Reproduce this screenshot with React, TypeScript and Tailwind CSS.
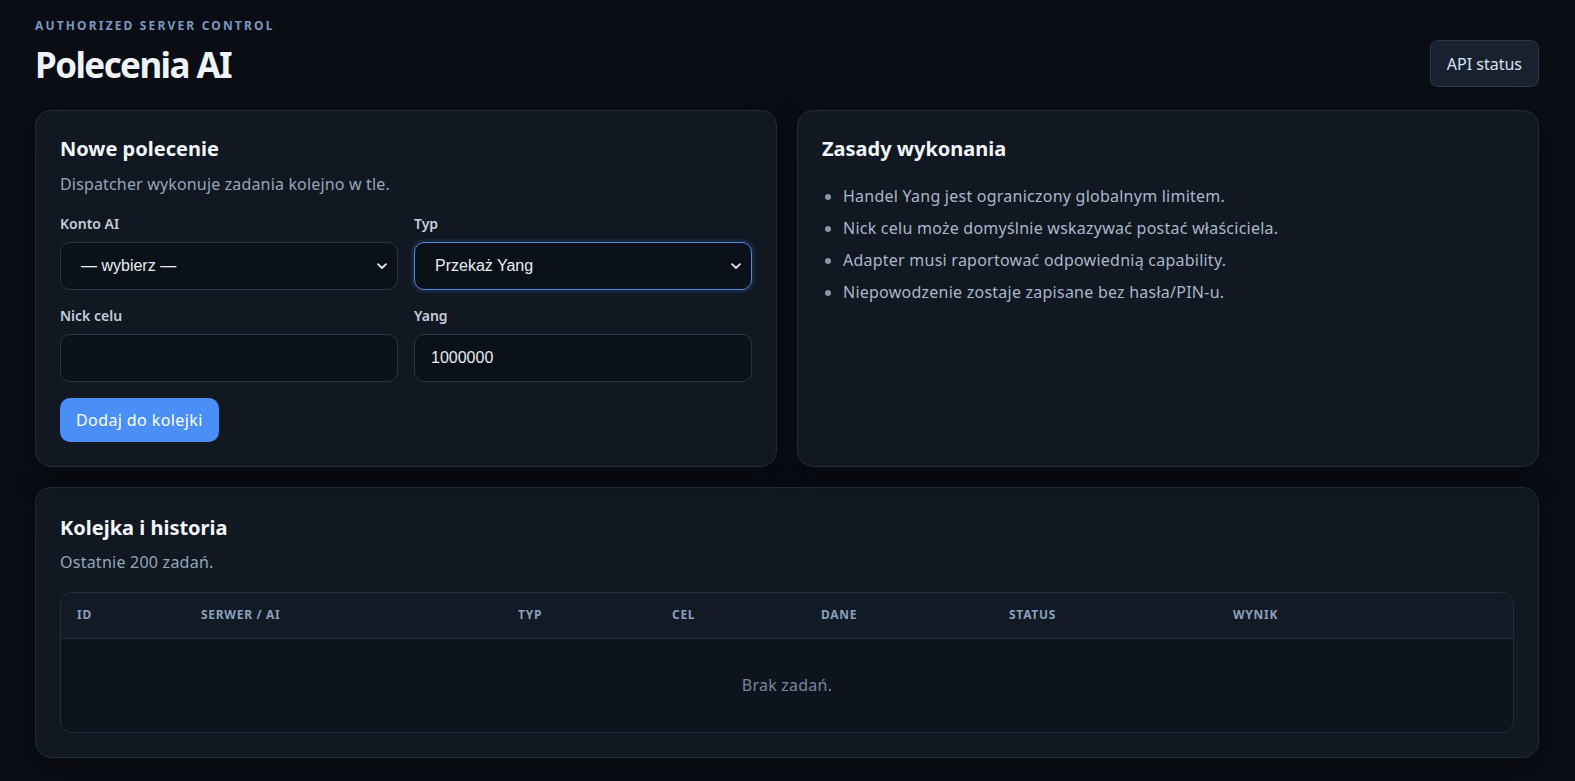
import React from 'react';

const columns = [
  { key: 'id', label: 'ID', width: 'w-[124px]' },
  { key: 'server', label: 'Serwer / AI', width: 'w-[317px]' },
  { key: 'type', label: 'Typ', width: 'w-[154px]' },
  { key: 'target', label: 'Cel', width: 'w-[149px]' },
  { key: 'data', label: 'Dane', width: 'w-[188px]' },
  { key: 'status', label: 'Status', width: 'w-[224px]' },
  { key: 'result', label: 'Wynik', width: '' },
];

const rules = [
  'Handel Yang jest ograniczony globalnym limitem.',
  'Nick celu może domyślnie wskazywać postać właściciela.',
  'Adapter musi raportować odpowiednią capability.',
  'Niepowodzenie zostaje zapisane bez hasła/PIN-u.',
];

function Chevron() {
  return (
    <svg
      className="pointer-events-none absolute right-[10px] top-1/2 -translate-y-1/2"
      width="12"
      height="12"
      viewBox="0 0 12 12"
      fill="none"
    >
      <path d="M2 4.2 6 8l4-3.8" stroke="#e5e9f0" strokeWidth="1.8" strokeLinecap="round" strokeLinejoin="round" />
    </svg>
  );
}

function Field({ label, children }: { label: string; children: React.ReactNode }) {
  return (
    <label className="flex flex-col gap-2">
      <span className="text-sm font-semibold leading-5 text-[#c3cedc]">{label}</span>
      {children}
    </label>
  );
}

function Card({ children, className = '' }: { children: React.ReactNode; className?: string }) {
  return (
    <section
      className={`rounded-2xl border border-[#222d3b] bg-[#111821] p-6 shadow-[0_10px_30px_rgba(0,0,0,0.35)] ${className}`}
    >
      {children}
    </section>
  );
}

export default function App() {
  return (
    <div className="min-h-[781px] bg-[#0a0d14] pl-[35px] pr-9 pb-6 pt-[18px] font-['Noto_Sans',sans-serif] text-[#e6ebf2]">
      <header className="mb-[25px] flex items-end justify-between">
        <div>
          <div className="text-xs font-bold uppercase leading-4 tracking-[0.18em] text-[#7b98c0]">
            Authorized server control
          </div>
          <h1 className="mt-[11px] text-[35px] font-bold leading-10 tracking-[-0.045em] text-[#eef3fa]">Polecenia AI</h1>
        </div>
        <button className="-mb-0.5 h-[47px] rounded-lg border border-[#2a3748] bg-[#172130] px-4 text-base text-[#dbe3ee]">
          API status
        </button>
      </header>

      <div className="grid grid-cols-2 gap-5">
        <Card>
          <h2 className="text-xl font-bold leading-7 text-[#f1f5fb]">Nowe polecenie</h2>
          <p className="mt-[9px] text-base leading-6 tracking-[0.01em] text-[#94a6bd]">
            Dispatcher wykonuje zadania kolejno w tle.
          </p>

          <div className="mt-[18px] grid grid-cols-2 gap-x-4 gap-y-4">
            <Field label="Konto AI">
              <div className="relative">
                <select className="h-12 w-full appearance-none rounded-[10px] border border-[#283647] bg-[#0b1119] pl-5 pr-8 font-['Liberation_Sans',sans-serif] text-base text-[#e8ecf2] outline-none">
                  <option>— wybierz —</option>
                </select>
                <Chevron />
              </div>
            </Field>
            <Field label="Typ">
              <div className="relative">
                <select
                  defaultValue="transfer"
                  className="h-12 w-full appearance-none rounded-[10px] border border-[#4d8ae0] bg-[#0b1119] pl-5 pr-8 font-['Liberation_Sans',sans-serif] text-base text-[#e8ecf2] shadow-[0_0_0_3px_#17243a] outline-none"
                >
                  <option value="transfer">Przekaż Yang</option>
                </select>
                <Chevron />
              </div>
            </Field>
            <Field label="Nick celu">
              <input
                className="h-12 w-full rounded-[10px] border border-[#283647] bg-[#0b1119] px-4 font-['Liberation_Sans',sans-serif] text-base text-[#e8ecf2] outline-none"
              />
            </Field>
            <Field label="Yang">
              <input
                defaultValue="1000000"
                className="h-12 w-full rounded-[10px] border border-[#283647] bg-[#0b1119] px-4 font-['Liberation_Sans',sans-serif] text-base text-[#e8ecf2] outline-none"
              />
            </Field>
          </div>

          <button className="mt-4 h-11 rounded-[10px] bg-[#4a8ff7] px-4 text-base tracking-[0.025em] text-white">
            Dodaj do kolejki
          </button>
        </Card>

        <Card>
          <h2 className="text-xl font-bold leading-7 text-[#f1f5fb]">Zasady wykonania</h2>
          <ul className="mt-[21px] list-disc space-y-2 pl-[21px] text-base leading-6 tracking-[0.015em] text-[#a9b7ca] marker:text-[#8796ab]">
            {rules.map((rule) => (
              <li key={rule}>{rule}</li>
            ))}
          </ul>
        </Card>
      </div>

      <Card className="mt-5">
        <h2 className="mt-0.5 text-xl font-bold leading-7 text-[#f1f5fb]">Kolejka i historia</h2>
        <p className="mt-[8px] text-base leading-6 tracking-[0.015em] text-[#94a6bd]">Ostatnie 200 zadań.</p>

        <div className="mt-[18px] overflow-hidden rounded-xl border border-[#232f3e] bg-[#0e141d]">
          <table className="w-full table-fixed border-collapse">
            <thead className="bg-[#121a25]">
              <tr className="border-b border-[#232f3e]">
                {columns.map((col) => (
                  <th
                    key={col.key}
                    className={`h-[45px] px-4 text-left text-xs font-bold uppercase tracking-[0.06em] text-[#8aa0bd] ${col.width}`}
                  >
                    {col.label}
                  </th>
                ))}
              </tr>
            </thead>
            <tbody>
              <tr>
                <td colSpan={columns.length} className="h-[94px] text-center text-base tracking-[0.015em] text-[#7688a0]">
                  Brak zadań.
                </td>
              </tr>
            </tbody>
          </table>
        </div>
      </Card>
    </div>
  );
}
